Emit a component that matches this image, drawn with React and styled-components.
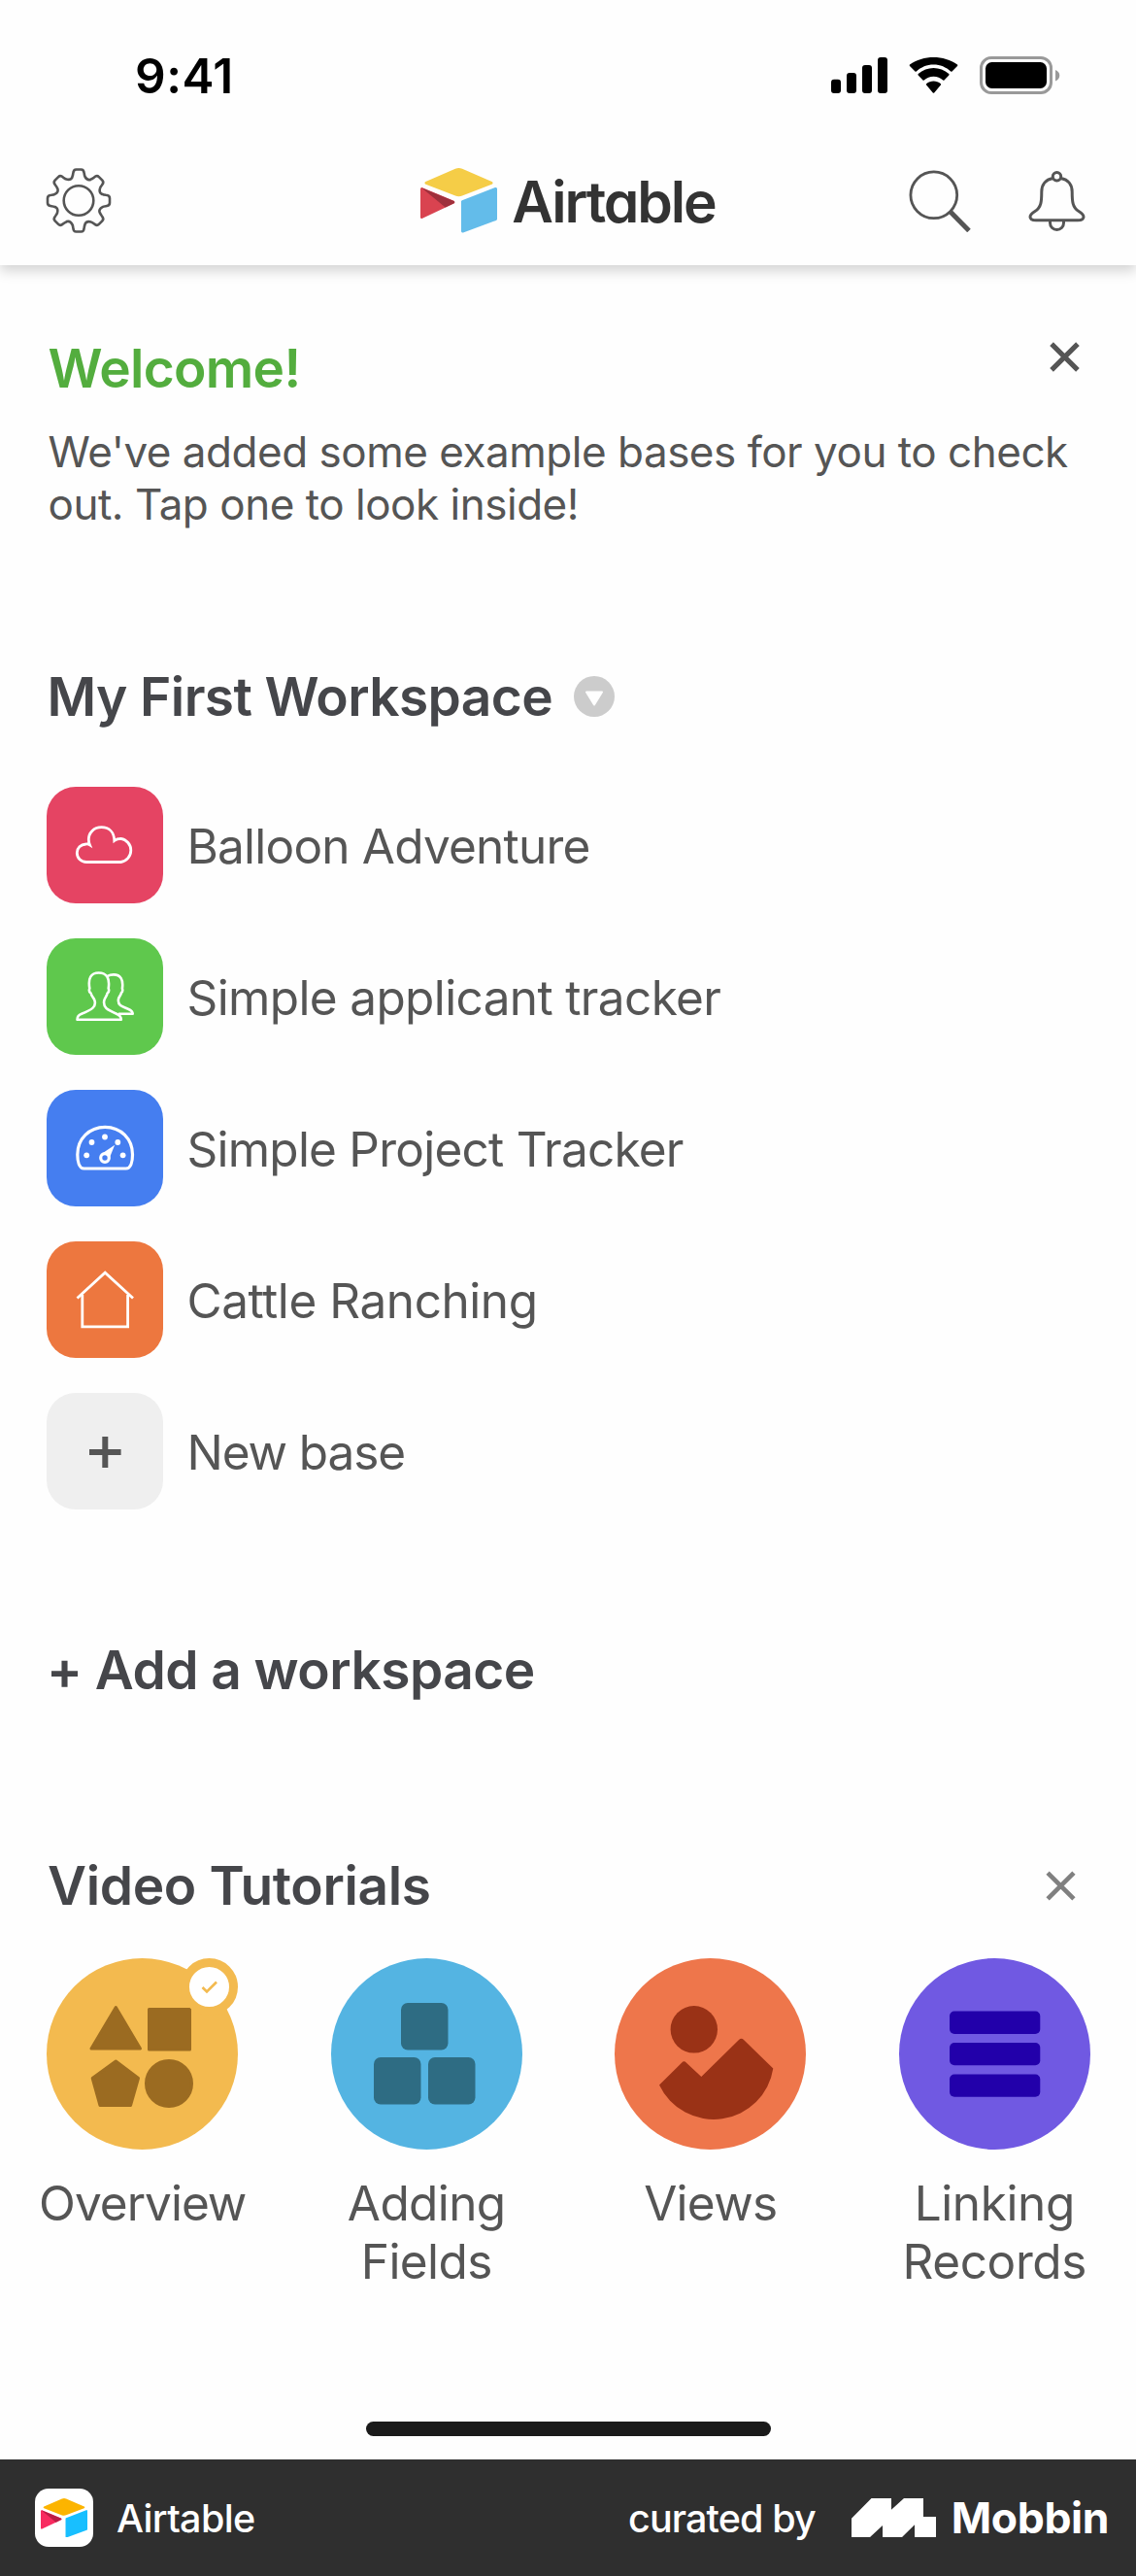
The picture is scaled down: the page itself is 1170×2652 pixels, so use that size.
import React from "react";
import styled, { createGlobalStyle } from "styled-components";

const GlobalStyle = createGlobalStyle`
  * { box-sizing: border-box; }
  body { margin: 0; background: #fefefe; font-family: Inter, "Liberation Sans", sans-serif; }
  h1, h2, p { margin: 0; }
  svg { display: block; flex: none; }
`;

const Screen = styled.div`
  display: flex;
  flex-direction: column;
  width: 1170px;
  height: 2652px;
  background: #fefefe;
  color: #555;
`;

const StatusBar = styled.div`
  display: flex;
  justify-content: space-between;
  align-items: flex-start;
  height: 140px;
  padding: 48px 78px 0 139px;
  color: #000;
`;

const Time = styled.div`
  font-size: 49.5px;
  line-height: 60px;
  font-weight: 600;
  letter-spacing: 0.5px;
`;

const StatusIcons = styled.div`
  display: flex;
  gap: 22px;
  padding-top: 10px;
`;

const Header = styled.header`
  display: grid;
  grid-template-columns: 1fr auto 1fr;
  align-items: center;
  height: 133px;
  padding: 0 52px 0 47px;
  background: #fefefe;
  box-shadow: 0 6px 12px rgba(0, 0, 0, 0.17);
  clip-path: inset(0 0 -24px 0);
`;

const Lockup = styled.div`
  display: flex;
  align-items: center;
  gap: 15px;
`;

const Wordmark = styled.div`
  margin-right: -5px;
  padding-top: 3px;
  font-size: 58.7px;
  line-height: 70px;
  font-weight: 600;
  font-feature-settings: "cv11";
  color: #333;
  letter-spacing: -2.1px;
`;

const HeaderActions = styled.div`
  display: flex;
  justify-content: flex-end;
  align-items: center;
  gap: 59px;
`;

const Main = styled.main`
  flex: 1;
  padding: 73px 48px 0;
`;

const SectionHead = styled.div`
  display: flex;
  justify-content: space-between;
  align-items: ${(p) => p.$align || "center"};
  margin-top: ${(p) => p.$top || 0}px;
  padding-right: ${(p) => p.$right || 0}px;
`;

const WorkspaceHead = styled.div`
  display: flex;
  align-items: center;
  gap: 22px;
  margin-top: 138px;
`;

const Title = styled.h2`
  padding-left: ${(p) => p.$indent || 0}px;
  font-size: 55px;
  line-height: 66px;
  font-weight: 600;
  white-space: nowrap;
  color: ${(p) => p.$color || "#45464a"};
  letter-spacing: ${(p) => p.$track || 0}px;
`;

const CloseButton = styled.div`
  padding-top: ${(p) => p.$drop || 0}px;
`;

const Copy = styled.p`
  margin-top: 26px;
  padding-left: 1.5px;
  font-size: 44px;
  line-height: 54px;
  white-space: nowrap;
  letter-spacing: -0.48px;
`;

const BaseList = styled.div`
  display: flex;
  flex-direction: column;
  gap: 36px;
  margin-top: 60px;
`;

const BaseRow = styled.div`
  display: flex;
  align-items: center;
  gap: 24.5px;
`;

const Tile = styled.div`
  width: 120px;
  height: 120px;
  border-radius: 30px;
  background: ${(p) => p.$bg};
`;

const BaseName = styled.div`
  padding-top: 1px;
  font-size: 49.5px;
  line-height: 60px;
  white-space: nowrap;
  letter-spacing: ${(p) => p.$track || 0}px;
`;

const AddWorkspace = styled.div`
  margin-top: 132px;
`;

const Tutorials = styled.div`
  display: grid;
  grid-template-columns: repeat(4, 1fr);
  margin: 42px -48.5px 0 -47.5px;
`;

const Tutorial = styled.div`
  display: flex;
  flex-direction: column;
  align-items: center;
`;

const Disc = styled.div`
  position: relative;
  width: 197px;
  height: 197px;
  border-radius: 50%;
  background: ${(p) => p.$bg};
`;

const DoneBadge = styled.div`
  position: absolute;
  top: 0;
  right: 0;
  display: grid;
  place-items: center;
  width: 59px;
  height: 59px;
  border: 9px solid #f3ba4f;
  border-radius: 50%;
  background: #fff;
`;

const TutorialLabel = styled.div`
  max-width: 230px;
  margin-top: 25px;
  font-size: 49.5px;
  line-height: 60px;
  text-align: center;
  letter-spacing: ${(p) => p.$track || 0}px;
`;

const HomeIndicator = styled.div`
  width: 417px;
  height: 15px;
  margin: 0 auto 24px;
  border-radius: 8px;
  background: #1a1a1a;
`;

const Footer = styled.footer`
  display: flex;
  align-items: center;
  height: 120px;
  padding: 0 28px 0 36px;
  background: #2f2f2f;
  color: #fff;
`;

const AppBadge = styled.div`
  display: grid;
  place-items: center;
  width: 60px;
  height: 60px;
  margin-right: 24px;
  border-radius: 14px;
  background: #fff;
`;

const FooterText = styled.div`
  padding-top: 2px;
  font-size: 39.5px;
  line-height: 48px;
  font-weight: 500;
  letter-spacing: ${(p) => p.$track || 0}px;
`;

const Credit = styled.div`
  display: flex;
  align-items: center;
  margin-left: auto;
`;

const MobbinMark = styled.svg`
  margin-left: 37px;
`;

const MobbinName = styled.div`
  margin-left: 16px;
  font-size: 44.5px;
  line-height: 52px;
  font-weight: 650;
  letter-spacing: -0.4px;
`;

const Signal = () => (
  <svg width="58" height="38" viewBox="0 0 58 38" fill="#000">
    <rect x="0" y="23.7" width="10" height="14.3" rx="3" />
    <rect x="16" y="17" width="10" height="21" rx="3" />
    <rect x="32" y="9" width="10" height="29" rx="3" />
    <rect x="48" y="1" width="10" height="37" rx="3" />
  </svg>
);

const Wifi = () => (
  <svg width="51" height="38" viewBox="0 0 51 38" fill="#000">
    <path d="M25.5 8.4c6.8 0 13 2.6 17.7 7.1.4.4.9.4 1.3 0l5.5-5.6c.4-.4.4-1 0-1.4C36.3-1.5 14.7-1.5 1 8.5c-.4.4-.4 1 0 1.4l5.5 5.6c.4.4.9.4 1.3 0C12.5 11 18.7 8.4 25.5 8.4z" />
    <path d="M25.5 20.7c3.7 0 7.1 1.4 9.7 3.7.4.4.9.4 1.3 0l4.8-4.9c.4-.4.4-1 0-1.4-8.9-8.3-22.7-8.3-31.6 0-.4.4-.4 1 0 1.4l4.8 4.9c.4.4.9.4 1.3 0 2.6-2.3 6-3.7 9.7-3.7z" />
    <path d="M32.9 28.2c.4.4.4 1 0 1.4l-6.7 7.9c-.4.4-1 .4-1.4 0l-6.7-7.9c-.4-.4-.4-1 0-1.4 4.2-3.6 10.6-3.6 14.8 0z" />
  </svg>
);

const Battery = () => (
  <svg width="83" height="39" viewBox="0 0 83 39">
    <rect x="1.5" y="1.5" width="72" height="36" rx="10.5" fill="none" stroke="#999" strokeWidth="3" />
    <rect x="6" y="6" width="63" height="27" rx="6.5" fill="#000" />
    <path d="M78 14c2.6 1 4.3 3.1 4.3 5.700S80.600 24.400 78 25.400z" fill="#999" />
  </svg>
);

// One tooth of the cog, repeated every 45 degrees.
const gearPath = (() => {
  const tooth = [
    ["L", -6.6, -24.5],
    ["Q", -6, -25.5, -5.7, -28],
    ["Q", -5.4, -32, -2.5, -32],
    ["L", 2.5, -32],
    ["Q", 5.4, -32, 5.7, -28],
    ["Q", 6, -25.5, 6.6, -24.5],
    ["Q", 8.8, -20.5, 12.2, -21.6],
  ];
  let d = "";
  for (let i = 0; i < 8; i++) {
    const a = (i * Math.PI) / 4;
    tooth.forEach(([cmd, ...n], j) => {
      const pts = [];
      for (let k = 0; k < n.length; k += 2) {
        pts.push((n[k] * Math.cos(a) - n[k + 1] * Math.sin(a)).toFixed(2));
        pts.push((n[k] * Math.sin(a) + n[k + 1] * Math.cos(a)).toFixed(2));
      }
      d += (i === 0 && j === 0 ? "M" : cmd) + pts.join(" ");
    });
  }
  return d + "Z";
})();

const Gear = () => (
  <svg width="68" height="68" viewBox="-34 -33.5 68 68" fill="none" stroke="#555" strokeWidth="2.6" strokeLinejoin="round">
    <path d={gearPath} />
    <circle r="15.3" />
  </svg>
);

const Search = () => (
  <svg width="64" height="64" viewBox="0 0 64 64" fill="none" stroke="#555">
    <circle cx="25.8" cy="25.8" r="23.9" strokeWidth="2.8" />
    <path d="M42.3 42.5 62 62.5" strokeWidth="5" />
  </svg>
);

const Bell = () => (
  <svg width="59" height="64" viewBox="0 0 59 64" fill="none" stroke="#555" strokeWidth="3">
    <circle cx="29.5" cy="6.7" r="4.2" />
    <path d="M25.5 8.5C17.5 9.8 13.8 15.5 13.8 22.5C13.8 32 13.5 38.5 7 42.5C3.5 44.6 2 46 2 48.3C2 50.8 4.5 51.8 8 51.8H51C54.5 51.8 57 50.8 57 48.3C57 46 55.5 44.6 52 42.5C45.5 38.5 45.2 32 45.2 22.5C45.2 15.5 41.5 9.8 33.5 8.5" />
    <path d="M22.5 52v2.500a7 7 0 0 0 14 0V52" />
  </svg>
);

const AirtableMark = ({ width, colors }) => (
  <svg width={width} height={(width * 67) / 79} viewBox="0 0 79 67" strokeWidth="3" strokeLinejoin="round">
    <path d="M6 15.4 36.5 2.2Q39.5 1 42.5 2.2L73 15.4 42.5 27.2Q39.5 28.3 36.5 27.2Z" fill={colors[0]} stroke={colors[0]} />
    <path d="M43.5 34.6 77.5 21.5V52.5L43.5 65Z" fill={colors[1]} stroke={colors[1]} />
    <path d="M1.5 21.6 33.8 35.2 1.5 50.5Z" fill={colors[2]} stroke={colors[2]} />
    <path d="M1 20.2 34.5 34Q36.2 35.2 34.5 36.3L25.7 40.6Z" fill={colors[3]} />
  </svg>
);

const Cross = ({ size, color, stroke }) => (
  <svg width={size} height={size} viewBox="0 0 30 30" stroke={color} strokeWidth={stroke}>
    <path d="M2 2 28 28M28 2 2 28" />
  </svg>
);

const Dropdown = () => (
  <svg width="42" height="42" viewBox="0 0 42 42">
    <circle cx="21" cy="21" r="21" fill="#ccc" />
    <path d="M13 16.5H29L21 29.5Z" fill="#fff" stroke="#fff" strokeWidth="2" strokeLinejoin="round" />
  </svg>
);

const glyphs = {
  cloud: (
    <path d="M41 77.5H76.5A12.2 12.2 0 0 0 76.5 53.4Q72.5 53.4 69.8 55.5C69.5 47 64.5 41.7 56.5 41.7C48.5 41.7 43.3 47.5 43.3 54Q43.3 57 44.4 59.7Q43 58.8 40.5 59C35 59.3 31.3 63 31.3 68C31.3 73.5 35.5 77.5 41 77.5Z" />
  ),
  people: (
    <g strokeWidth="2.6" strokeLinejoin="round">
      <path d="M31.5 83.7C31.5 80.5 33 78.8 36 77.7C41 75.800 45 74 47.600 71.600C50 69.300 50.300 66 49.200 63.200C48 60.500 46.300 59.500 45.600 56.500C44 55.500 43.500 53.500 44.300 51.500C42.500 41 45.500 35.500 53.700 35.500C61.900 35.500 65.300 41 63.700 51.500C64.500 53.500 64 55.500 62.600 56.500C62 59.500 60 61 59.300 64C58.600 67.500 59 69.700 61.500 72C64.500 74.500 67.500 75.800 72 77.700C75 78.900 76.800 80.500 76.800 83.700Z" />
      <path d="M62.800 38.900C64.500 37.900 66.700 37.400 69 37.400C76.200 37.400 79.300 42.500 77.900 51.800C78.600 53.500 78.100 55.200 76.900 56.200C76.400 59 74.500 60 74 62.500C73.500 65.500 74 67.500 76 69C78.500 70.800 81 71.300 84 72.700C87 74 88.700 75.300 88.700 77.700H74" />
    </g>
  ),
  gauge: (
    <>
      <path d="M38.5 81C33.5 81 31.8 73.5 31.8 66.7C31.8 50.5 44 38.4 60.200 38.400S88.500 50.500 88.500 66.700C88.500 73.500 86.800 81 81.800 81Z" strokeWidth="3.200" />
      <g fill="#fff" stroke="none">
        <circle cx="46.500" cy="54" r="2.900" />
        <circle cx="60" cy="48.500" r="2.900" />
        <circle cx="73.300" cy="54" r="2.900" />
        <circle cx="41.200" cy="67.300" r="2.900" />
        <circle cx="78.600" cy="67.300" r="2.900" />
        <path d="M58.300 64.800 70.200 56.700 65 69.500Z" />
      </g>
      <circle cx="60" cy="70" r="4.300" strokeWidth="3.200" />
    </>
  ),
  house: (
    <>
      <path d="M31.5 58.5 60.2 32.2 89 58.5" />
      <path d="M36.8 55V87.8H83.6V55" />
    </>
  ),
  plus: <path d="M60.3 45V77M44 61H76.6" stroke="#555" strokeWidth="6" />,
};

const bases = [
  { name: "Balloon Adventure", bg: "#e54463", icon: "cloud", track: -0.79 },
  { name: "Simple applicant tracker", bg: "#5fc84d", icon: "people", track: -0.63 },
  { name: "Simple Project Tracker", bg: "#457ef0", icon: "gauge", track: -0.76 },
  { name: "Cattle Ranching", bg: "#ed773f", icon: "house", track: -0.44 },
  { name: "New base", bg: "#efefef", icon: "plus", track: -1.1 },
];

const tutorials = [
  {
    name: "Overview",
    bg: "#f3ba4f",
    track: -1,
    done: true,
    art: (
      <g fill="#9b6b21" stroke="#9b6b21" strokeWidth="3" strokeLinejoin="round">
        <path d="M71.3 50.5 96.5 93H46Z" />
        <rect x="105.5" y="52.5" width="42" height="41.5" />
        <path d="M71.3 106 94.5 123.5 86.5 151.5H55L47.2 123.5Z" />
        <circle cx="126" cy="129" r="23.5" />
      </g>
    ),
  },
  {
    name: "Adding Fields",
    bg: "#54b4e2",
    track: -0.6,
    art: (
      <g fill="#2e6c83">
        <rect x="72" y="46" width="48.5" height="48.5" rx="7" />
        <rect x="44" y="102" width="48.5" height="48.5" rx="7" />
        <rect x="100" y="102" width="48.5" height="48.5" rx="7" />
      </g>
    ),
  },
  {
    name: "Views",
    bg: "#ee764b",
    track: -0.7,
    art: (
      <g fill="#9a3216">
        <circle cx="81.8" cy="73.3" r="24.2" />
        <path d="M46 130.5 69 107.7Q71.5 105 74 107.7L89.3 122 128 84Q130.5 81.5 133 84L163.3 113.5A62 62 0 0 1 46 130.5Z" />
      </g>
    ),
  },
  {
    name: "Linking Records",
    bg: "#7059e2",
    track: -0.4,
    art: (
      <g fill="#2200aa">
        <rect x="52" y="54.6" width="93.3" height="23.3" rx="5" />
        <rect x="52" y="87" width="93.3" height="23.3" rx="5" />
        <rect x="52" y="119.5" width="93.3" height="23.3" rx="5" />
      </g>
    ),
  },
];

export default function App() {
  return (
    <>
      <GlobalStyle />
      <Screen>
        <StatusBar>
          <Time>9:41</Time>
          <StatusIcons>
            <Signal />
            <Wifi />
            <Battery />
          </StatusIcons>
        </StatusBar>
        <Header>
          <Gear />
          <Lockup>
            <AirtableMark width={79} colors={["#f5cd47", "#63bcea", "#d94350", "#9f303c"]} />
            <Wordmark>Airtable</Wordmark>
          </Lockup>
          <HeaderActions>
            <Search />
            <Bell />
          </HeaderActions>
        </Header>
        <Main>
          <SectionHead $align="flex-start" $right={10}>
            <Title $color="#53ad3e" $indent={1.5} $track={-0.7}>
              Welcome!
            </Title>
            <CloseButton $drop={6}>
              <Cross size={31} color="#555" stroke={5} />
            </CloseButton>
          </SectionHead>
          <Copy>
            We've added some example bases for you to check
            <br />
            out. Tap one to look inside!
          </Copy>
          <WorkspaceHead>
            <Title $indent={0.5} $track={-0.6}>
              My First Workspace
            </Title>
            <Dropdown />
          </WorkspaceHead>
          <BaseList>
            {bases.map((b) => (
              <BaseRow key={b.name}>
                <Tile $bg={b.bg}>
                  <svg width="120" height="120" viewBox="0 0 120 120" fill="none" stroke="#fff" strokeWidth="2.8">
                    {glyphs[b.icon]}
                  </svg>
                </Tile>
                <BaseName $track={b.track}>{b.name}</BaseName>
              </BaseRow>
            ))}
          </BaseList>
          <AddWorkspace>
            <Title $track={-0.55}>+ Add a workspace</Title>
          </AddWorkspace>
          <SectionHead $top={156} $right={14}>
            <Title $indent={1} $track={-0.35}>
              Video Tutorials
            </Title>
            <Cross size={31} color="#808080" stroke={4.5} />
          </SectionHead>
          <Tutorials>
            {tutorials.map((t) => (
              <Tutorial key={t.name}>
                <Disc $bg={t.bg}>
                  <svg width="197" height="197" viewBox="0 0 197 197">
                    {t.art}
                  </svg>
                  {t.done && (
                    <DoneBadge>
                      <svg width="18" height="14" viewBox="0 0 18 14" fill="none" stroke="#f3ba4f" strokeWidth="2.6">
                        <path d="M1.5 7 6 11.5 16 1.5" />
                      </svg>
                    </DoneBadge>
                  )}
                </Disc>
                <TutorialLabel $track={t.track}>{t.name}</TutorialLabel>
              </Tutorial>
            ))}
          </Tutorials>
        </Main>
        <HomeIndicator />
        <Footer>
          <AppBadge>
            <AirtableMark width={48} colors={["#fcb400", "#18bfff", "#f82b60", "#ba1e45"]} />
          </AppBadge>
          <FooterText $track={-0.65}>Airtable</FooterText>
          <Credit>
            <FooterText $track={-0.9}>curated by</FooterText>
            <MobbinMark width="87" height="40" viewBox="0 0 87 40" fill="#fff">
              <path d="M0 20.7 20.5 0H41V11.7L54 0H74V19H87V40H65V27.3L52 40H32V28L19 40H0Z" />
            </MobbinMark>
            <MobbinName>Mobbin</MobbinName>
          </Credit>
        </Footer>
      </Screen>
    </>
  );
}
